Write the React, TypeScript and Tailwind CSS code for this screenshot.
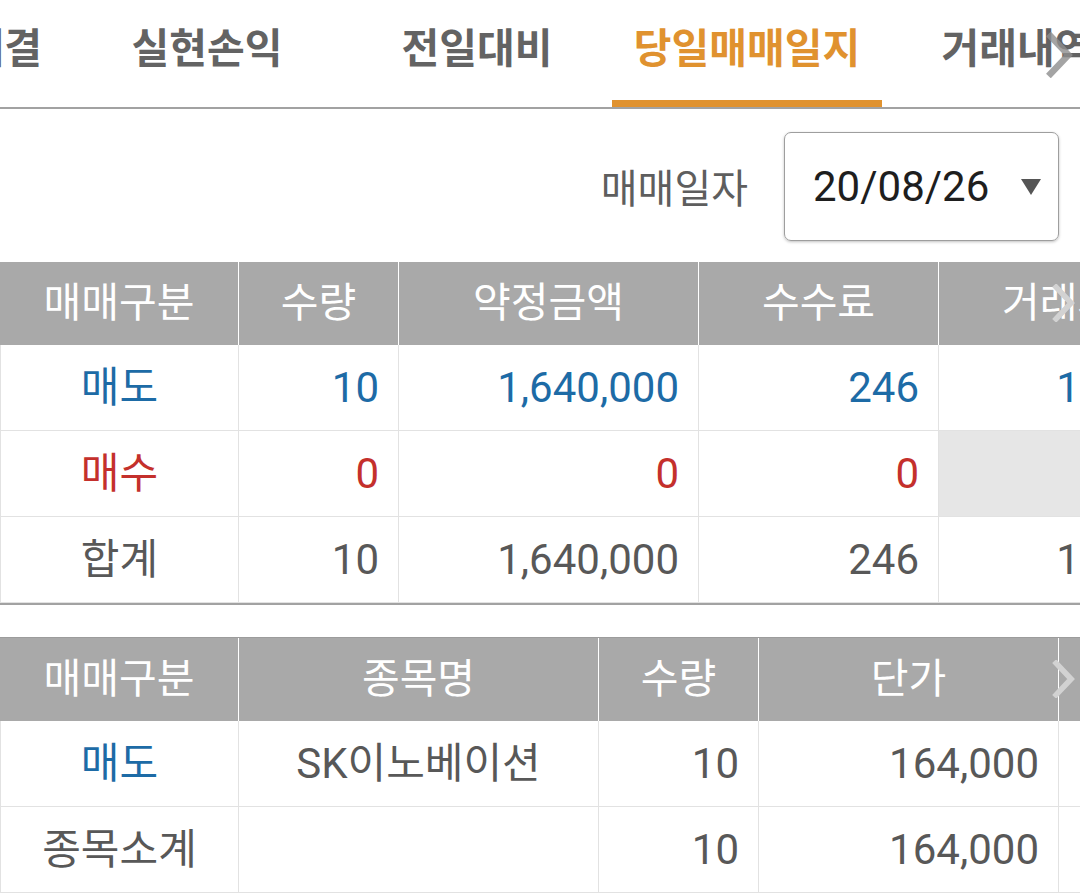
import React from 'react';

const FONT = "font-['Roboto','Noto_Sans_CJK_KR',sans-serif]";

const tabs = [
  { label: '미체결', active: false, first: true },
  { label: '실현손익', active: false },
  { label: '전일대비', active: false },
  { label: '당일매매일지', active: true },
  { label: '거래내역', active: false },
];

function Chevron({ className }: { className: string }) {
  return (
    <svg className={className} viewBox="0 0 30 48" fill="none">
      <polyline points="5,4 24,24 5,44" stroke="currentColor" strokeWidth="7" strokeLinecap="square" />
    </svg>
  );
}

type Cell = { text: string; align: 'center' | 'right'; color?: string; bg?: string };

const BLUE = 'text-[#1d6ba6]';
const RED = 'text-[#c4302c]';
const GRAY = 'text-[#585858]';

function Table({
  cols,
  head,
  rows,
  topBorder,
}: {
  cols: string;
  head: string[];
  rows: Cell[][];
  topBorder?: boolean;
}) {
  return (
    <div className={`relative overflow-hidden ${topBorder ? 'border-t border-[#9c9c9c]' : ''}`}>
      <div className={`grid ${cols} w-[1200px]`}>
        {head.map((h, i) => (
          <div
            key={i}
            className="h-[83px] bg-[#a9a9a9] border-r border-white flex items-center justify-center text-white text-[41px]"
          >
            {h}
          </div>
        ))}
        {rows.map((r, ri) =>
          r.map((c, ci) => (
            <div
              key={`${ri}-${ci}`}
              className={`h-[86px] flex items-center border-r border-b border-[#e2e2e2] ${
                ci === 0 ? 'border-l' : ''
              } ${c.align === 'center' ? 'justify-center text-[42px]' : 'justify-end pr-[19px] text-[42px]'} ${
                c.color ?? GRAY
              } ${c.bg ?? ''}`}
            >
              {c.text}
            </div>
          ))
        )}
      </div>
      <Chevron className="absolute left-[1052px] top-[22px] w-[24px] h-[38px] text-[#d2d2d2]" />
    </div>
  );
}

export default function App() {
  return (
    <div className={`w-[1080px] h-[893px] overflow-hidden bg-white ${FONT}`}>
      {/* tabs */}
      <div className="relative h-[109px] border-b-2 border-[#a2a2a2] overflow-hidden">
        <div className="flex ml-[-198px]">
          {tabs.map((t) => (
            <div
              key={t.label}
              className={`w-[270px] shrink-0 h-[109px] -mb-[2px] border-b-[9px] flex items-center text-[41px] font-bold ${
                t.first ? 'justify-end pr-[30px]' : 'justify-center'
              } ${t.active ? 'border-[#e0922f] text-[#e0922f]' : 'border-transparent text-[#636363]'}`}
            >
              {t.label}
            </div>
          ))}
        </div>
        <Chevron className="absolute left-[1046px] top-[32px] w-[28px] h-[46px] text-[#8e8e8e] opacity-80" />
      </div>

      {/* date picker */}
      <div className="flex justify-end items-center gap-[36px] pr-[21px] pt-[23px] pb-[21px]">
        <span className="text-[40px] text-[#5e5e5e] pt-[6px]">매매일자</span>
        <div className="w-[275px] h-[109px] rounded-[7px] border border-[#9e9e9e] shadow-[0_1px_3px_rgba(0,0,0,0.25)] flex items-center justify-between pl-[28px] pr-[17px]">
          <span className="text-[42px] text-[#1e1e1e]">20/08/26</span>
          <svg viewBox="0 0 20 16" className="w-[20px] h-[16px] text-[#555]">
            <polygon points="0,0 20,0 10,16" fill="currentColor" />
          </svg>
        </div>
      </div>

      {/* summary table */}
      <div className="border-b-2 border-[#a2a2a2]">
        <Table
          cols="grid-cols-[239px_160px_300px_240px_240px]"
          head={['매매구분', '수량', '약정금액', '수수료', '거래세']}
          rows={[
            [
              { text: '매도', align: 'center', color: BLUE },
              { text: '10', align: 'right', color: BLUE },
              { text: '1,640,000', align: 'right', color: BLUE },
              { text: '246', align: 'right', color: BLUE },
              { text: '1,640', align: 'right', color: BLUE },
            ],
            [
              { text: '매수', align: 'center', color: RED },
              { text: '0', align: 'right', color: RED },
              { text: '0', align: 'right', color: RED },
              { text: '0', align: 'right', color: RED },
              { text: '', align: 'right', bg: 'bg-[#e6e6e6]' },
            ],
            [
              { text: '합계', align: 'center' },
              { text: '10', align: 'right' },
              { text: '1,640,000', align: 'right' },
              { text: '246', align: 'right' },
              { text: '1,640', align: 'right' },
            ],
          ]}
        />
      </div>

      {/* detail table */}
      <div className="mt-[32px]">
        <Table
          topBorder
          cols="grid-cols-[239px_360px_160px_300px_141px]"
          head={['매매구분', '종목명', '수량', '단가', '']}
          rows={[
            [
              { text: '매도', align: 'center', color: BLUE },
              { text: 'SK이노베이션', align: 'center' },
              { text: '10', align: 'right' },
              { text: '164,000', align: 'right' },
              { text: '', align: 'right' },
            ],
            [
              { text: '종목소계', align: 'center' },
              { text: '', align: 'center' },
              { text: '10', align: 'right' },
              { text: '164,000', align: 'right' },
              { text: '', align: 'right' },
            ],
          ]}
        />
      </div>
    </div>
  );
}
